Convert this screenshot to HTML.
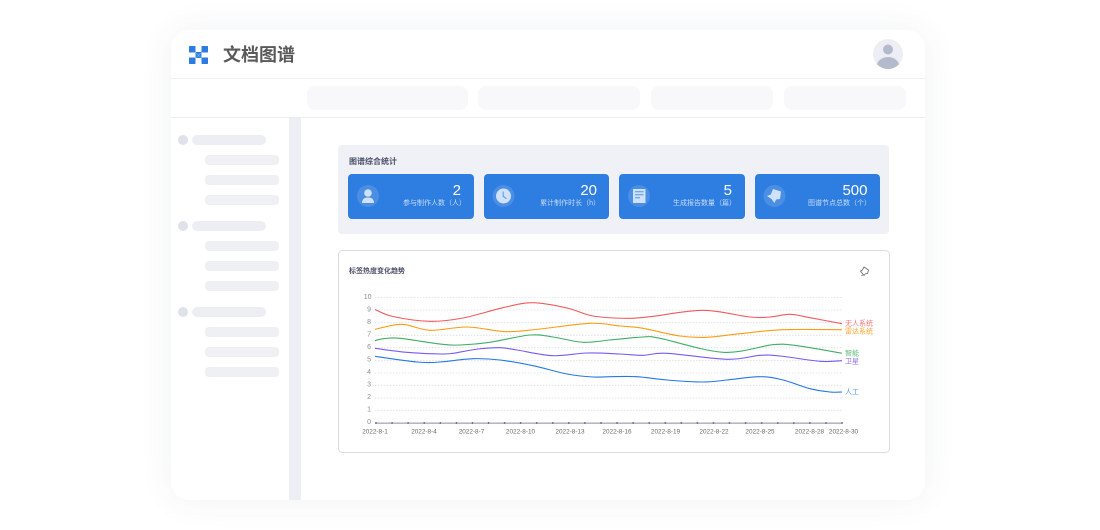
<!DOCTYPE html>
<html lang="zh-CN"><head><meta charset="utf-8"><title>文档图谱</title>
<style>
html,body{margin:0;padding:0;background:#fff}
body{width:1100px;height:530px;overflow:hidden;position:relative;font-family:"Liberation Sans","Noto Sans CJK SC",sans-serif}
.a{position:absolute}
.card{left:171px;top:30px;width:754px;height:470px;background:#fff;border-radius:18px;box-shadow:0 0 34px rgba(60,70,100,.07)}
.top{top:86px;height:24px;background:#f8f8fa;border-radius:8px}
.dot{left:178px;width:10px;height:10px;border-radius:50%;background:#dfe2ea}
.h{left:192px;width:74px;height:10px;border-radius:5px;background:#eceef3}
.i{left:205px;width:74px;height:10px;border-radius:4px;background:#eff0f4}
.s{top:174px;width:125.5px;height:45px;background:#2e7de0;border-radius:4px}
.n{top:182px;color:#fff;font-size:15px;line-height:18px;text-align:right;white-space:nowrap}
.l{top:197.5px;color:#c9dcf7;font-size:7px;line-height:12px;text-align:right;white-space:nowrap}
svg text{font-family:"Liberation Sans","Noto Sans CJK SC",sans-serif}
</style></head><body>
<div class="a card"></div>
<svg class="a" style="left:0;top:0" width="1100" height="530" viewBox="0 0 1100 530">
<g fill="#2c7be0"><rect x="189" y="46" width="6.500" height="6.500" rx=".6"/><rect x="201.500" y="46" width="6.500" height="6.500" rx=".6"/><rect x="189" y="57.500" width="6.500" height="6.500" rx=".6"/><rect x="201.500" y="57.500" width="6.500" height="6.500" rx=".6"/><rect x="195.500" y="52" width="6" height="6"/></g>
<path d="M195.500 52.500L201.500 58M201.500 52.500L195.500 58" stroke="#fff" stroke-width=".5" stroke-opacity=".6"/>
<rect x="171" y="78" width="754" height="1" fill="#f0f0f3"/>
<rect x="171" y="117" width="754" height="1" fill="#ececf0"/>
<rect x="289" y="118" width="12" height="382" fill="#eeeff4"/>
<clipPath id="av"><circle cx="888" cy="54" r="15"/></clipPath>
<circle cx="888" cy="54" r="15" fill="#eceef3"/>
<g clip-path="url(#av)" fill="#b2bacc"><circle cx="888" cy="49.500" r="5"/><ellipse cx="888" cy="67" rx="11.500" ry="10"/></g>
</svg>
<div class="a" style="left:223px;top:43px;font-size:18px;line-height:24px;font-weight:700;color:#5a5a5a;white-space:nowrap">文档图谱</div>

<div class="a top" style="left:307px;width:161px"></div>
<div class="a top" style="left:478px;width:162px"></div>
<div class="a top" style="left:651px;width:122px"></div>
<div class="a top" style="left:784px;width:122px"></div>

<div class="a dot" style="top:135px"></div><div class="a h" style="top:135px"></div>
<div class="a i" style="top:155px"></div><div class="a i" style="top:175px"></div><div class="a i" style="top:195px"></div>
<div class="a dot" style="top:221px"></div><div class="a h" style="top:221px"></div>
<div class="a i" style="top:241px"></div><div class="a i" style="top:261px"></div><div class="a i" style="top:281px"></div>
<div class="a dot" style="top:307px"></div><div class="a h" style="top:307px"></div>
<div class="a i" style="top:327px"></div><div class="a i" style="top:347px"></div><div class="a i" style="top:367px"></div>

<div class="a" style="left:338px;top:145px;width:551px;height:89px;background:#f0f1f7;border-radius:4px"></div>
<div class="a" style="left:349px;top:155.5px;font-size:8px;line-height:12px;font-weight:700;color:#4a4f6a;white-space:nowrap">图谱综合统计</div>
<div class="a s" style="left:348px"></div>
<div class="a s" style="left:483.5px"></div>
<div class="a s" style="left:619px"></div>
<div class="a s" style="left:754.5px"></div>
<div class="a n" style="right:639px">2</div>
<div class="a n" style="right:503px">20</div>
<div class="a n" style="right:368px">5</div>
<div class="a n" style="right:232.5px">500</div>
<div class="a l" style="right:634px">参与制作人数（人）</div>
<div class="a l" style="right:500px">累计制作时长（h）</div>
<div class="a l" style="right:364px">生成报告数量（篇）</div>
<div class="a l" style="right:229px">图谱节点总数（个）</div>

<svg class="a" style="left:0;top:0" width="1100" height="530" viewBox="0 0 1100 530">
<g fill="#fff" fill-opacity=".14"><circle cx="368" cy="196" r="11"/><circle cx="503.500" cy="196" r="11"/><circle cx="639" cy="196" r="11"/><circle cx="774.500" cy="196" r="11"/></g>
<g fill="#cfe2fa">
<circle cx="368" cy="193" r="3.800"/><path d="M362 203c0-4 2.500-5.500 6-5.500s6 1.500 6 5.500z"/>
<circle cx="503.500" cy="196" r="7.500"/>
<path d="M633 189h12.500v14H633z"/>
</g>
<path d="M503.200 191.500v4.800l3.300 2.400" fill="none" stroke="#5f9de8" stroke-width="1.100"/>
<path d="M635 191.800h8.500M635 194.800h8.500M635 197.800h5" fill="none" stroke="#4f93e6" stroke-width="1"/>
<path d="M773 189l8 2.500-1 7.500-4 .5-1.500 3.500-3-4-4.500-3 3.800-1.500z" fill="#cfe2fa"/>
<rect x="338.500" y="250.500" width="551" height="202" rx="4" fill="#fff" stroke="#dcdce4"/>
<text x="349" y="273" font-size="7" font-weight="700" fill="#4a4f6a">标签热度变化趋势</text>
<path d="M864 267l4.500 3-1 3.500-2 .2-1.500 1.800-1.800-2.400-1.700-2 1.800-1z" fill="none" stroke="#666" stroke-width=".8"/>
<path d="M861.500 276l1.200-1.400" stroke="#666" stroke-width=".8"/>
<g stroke="#dedee3" stroke-width=".8" stroke-dasharray="1.500 1.500">
<path d="M375 297.400H842M375 310H842M375 322.700H842M375 335.300H842M375 347.700H842M375 360.300H842M375 373H842M375 385.300H842M375 398H842M375 410.300H842"/>
</g>
<g font-size="7" fill="#8c8c8c" text-anchor="end">
<text x="371.500" y="299">10</text><text x="371" y="311.500">9</text><text x="371" y="324">8</text><text x="371" y="336.500">7</text><text x="371" y="349">6</text><text x="371" y="361.500">5</text><text x="371" y="374">4</text><text x="371" y="386.500">3</text><text x="371" y="399">2</text><text x="371" y="411.500">1</text><text x="371" y="424">0</text>
</g>
<rect x="375" y="422.700" width="467" height=".8" fill="#6b7088"/>
<g id="ticks" fill="#4a4f6a"></g>
<g font-size="6.400" fill="#6a6a6a" text-anchor="middle">
<text x="375" y="433.500">2022-8-1</text><text x="424" y="433.500">2022-8-4</text><text x="471.500" y="433.500">2022-8-7</text><text x="520.500" y="433.500">2022-8-10</text><text x="570" y="433.500">2022-8-13</text><text x="617" y="433.500">2022-8-16</text><text x="665.500" y="433.500">2022-8-19</text><text x="714" y="433.500">2022-8-22</text><text x="760" y="433.500">2022-8-25</text><text x="809.500" y="433.500">2022-8-28</text><text x="843.500" y="433.500">2022-8-30</text>
</g>
<g fill="none" stroke-width="1.100" id="lines"></g>
<g font-size="7">
<text x="845" y="325.500" fill="#f4777a">无人系统</text>
<text x="845" y="333.500" fill="#fba72e">雷达系统</text>
<text x="845" y="355.500" fill="#5cb87a">智能</text>
<text x="845" y="363.500" fill="#8d6ff0">卫星</text>
<text x="845" y="394" fill="#5b9cec">人工</text>
</g>
</svg>
<script>
var S=[
["#f05a5f",[375,309.5,393,316.5,430,321.3,463,318,503,307.7,533,302.7,567,308,593,316,627,318.3,650,316.7,703,310.3,750,317,770,317,790,314.3,810,317.7,842,323.7]],
["#fb9d14",[375,329.3,402,324.3,430,330.3,467,327,507,331.7,540,329,590,323.3,620,326,643,328.3,680,336,707,337.3,740,333.7,783,329.7,842,329.7]],
["#3fae66",[375,340.7,383,338.8,400,338.3,440,344,460,345,490,342.3,530,335,553,337,583,342.3,610,340,643,337,660,338.3,723,352.3,773,344.7,797,345.7,842,353.3]],
["#7a5af0",[375,348.3,407,352.3,440,354,453,353.3,478,349,500,347.7,517,350,553,355.7,587,353,620,354,643,355.3,667,353.3,727,359.3,760,355.3,780,356,820,361.3,842,360.7]],
["#2578e4",[375,356.3,417,362,440,362,473,358.7,500,360,533,365.7,567,374,593,377,610,376.7,637,376.7,667,380,703,382,727,380,760,376.7,783,380,810,388.7,830,392,842,392]]
];
var h="";
S.forEach(function(s){var p=s[1],n=p.length/2,d="M"+p[0]+" "+p[1];
function X(i){i=Math.max(0,Math.min(n-1,i));return p[2*i]}
function Y(i){i=Math.max(0,Math.min(n-1,i));return p[2*i+1]}
for(var i=0;i<n-1;i++){var c1x=X(i)+(X(i+1)-X(i-1))/6,c1y=Y(i)+(Y(i+1)-Y(i-1))/6,c2x=X(i+1)-(X(i+2)-X(i))/6,c2y=Y(i+1)-(Y(i+2)-Y(i))/6;
d+="C"+c1x.toFixed(1)+" "+c1y.toFixed(1)+" "+c2x.toFixed(1)+" "+c2y.toFixed(1)+" "+X(i+1)+" "+Y(i+1)}
h+='<path d="'+d+'" stroke="'+s[0]+'"/>'});
document.getElementById("lines").innerHTML=h;
var t="";for(var k=0;k<30;k++){t+='<circle cx="'+(376+k*16.07).toFixed(1)+'" cy="423" r=".9"/>'}
document.getElementById("ticks").innerHTML=t;
</script>
</body></html>
